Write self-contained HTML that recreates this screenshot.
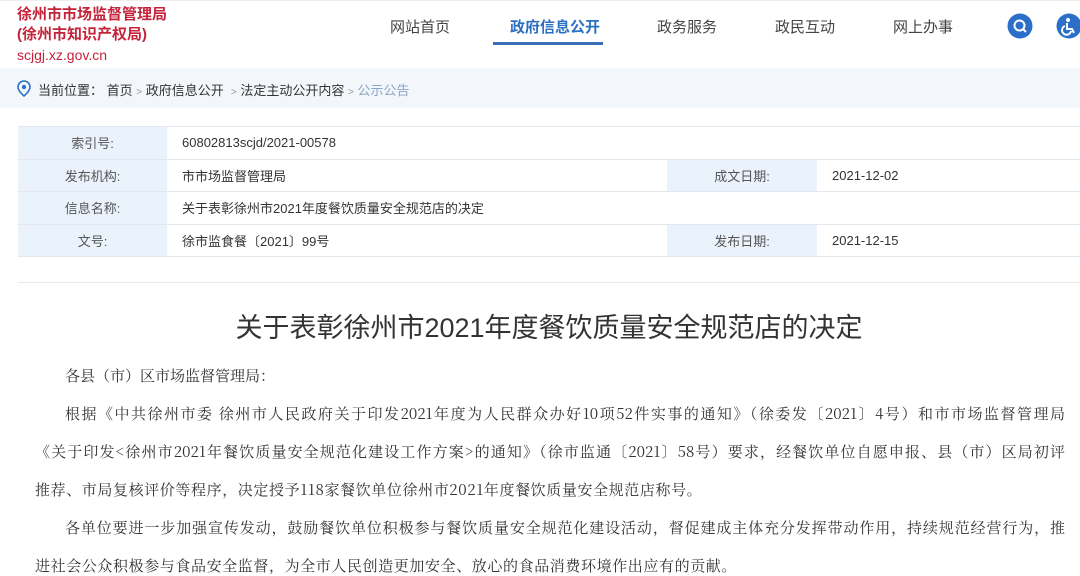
<!DOCTYPE html>
<html><head><meta charset="utf-8">
<style>
*{margin:0;padding:0;box-sizing:border-box}
body{width:1080px;height:572px;overflow:hidden;background:#fff;font-family:"Liberation Sans","Noto Sans CJK SC",sans-serif;color:#333;position:relative}
.a{position:absolute;white-space:nowrap}
.logo{color:#c5233a;font-weight:bold;font-size:15px;line-height:20px}
.nav{font-size:15px;color:#444;top:16px}
.crumb{position:absolute;left:0;top:68px;width:1080px;height:40px;background:#f3f7fb}
table{position:absolute;left:18px;top:126px;width:1062px;border-collapse:collapse;font-size:13px;color:#333}
td{height:32.5px;border-top:1px solid #e4e8ee;border-bottom:1px solid #e4e8ee;padding:0}
td.l{background:#eaf2fb;text-align:center;color:#555;width:149px}
td.v{padding-left:15px}
.p{position:absolute;left:35px;width:1030px;font-size:15px;color:#333;text-align:justify;text-align-last:justify;white-space:nowrap;font-family:"Noto Serif CJK SC","Noto Sans CJK SC",serif}
.p.i{left:65px;width:1000px}
.p.s{text-align-last:left}
</style></head><body>
<div style="position:absolute;left:0;top:0;width:1080px;height:1px;background:#eee"></div>
<div class="a logo" style="left:17px;top:5px">徐州市市场监督管理局</div>
<div class="a logo" style="left:17px;top:25px">(徐州市知识产权局)</div>
<div class="a" style="left:17px;top:47px;font-size:14px;color:#c5233a">scjgj.xz.gov.cn</div>
<div class="a nav" style="left:390px">网站首页</div>
<div class="a nav" style="left:510px;color:#2b6fc2;font-weight:bold">政府信息公开</div>
<div style="position:absolute;left:493px;top:42px;width:110px;height:3px;background:#3a6fb8"></div>
<div class="a nav" style="left:657px">政务服务</div>
<div class="a nav" style="left:775px">政民互动</div>
<div class="a nav" style="left:893px">网上办事</div>
<svg class="a" style="left:1007px;top:13px" width="26" height="26"><circle cx="13" cy="13" r="12.5" fill="#2b6fc8"/><circle cx="12.5" cy="12.5" r="5" fill="none" stroke="#fff" stroke-width="2"/><path d="M16 16l3 3" stroke="#fff" stroke-width="2"/></svg>
<svg class="a" style="left:1056px;top:13px" width="26" height="26"><circle cx="13" cy="13" r="12.5" fill="#2b6fc8"/><circle cx="12" cy="7" r="2" fill="#fff"/><path d="M11 10v6h5l2 4M9 13a4.5 4.5 0 1 0 6 5" fill="none" stroke="#fff" stroke-width="2"/></svg>
<div class="crumb"></div>
<svg class="a" style="left:17px;top:80px" width="14" height="17"><path d="M7 1a6 6 0 0 0-6 6c0 4 6 9 6 9s6-5 6-9a6 6 0 0 0-6-6z" fill="none" stroke="#2b6fc8" stroke-width="1.6"/><circle cx="7" cy="7" r="2.2" fill="#2b6fc8"/></svg>
<div class="a" style="left:38px;top:80px;font-size:13px;color:#333">当前位置： 首页 <span style="color:#999;font-size:10px">&gt;</span> 政府信息公开 &nbsp;<span style="color:#999;font-size:10px">&gt;</span> 法定主动公开内容 <span style="color:#999;font-size:10px">&gt;</span> <span style="color:#8aa4c4">公示公告</span></div>
<table>
<tr><td class="l">索引号:</td><td class="v" colspan="3">60802813scjd/2021-00578</td></tr>
<tr><td class="l">发布机构:</td><td class="v" style="width:500px">市市场监督管理局</td><td class="l" style="width:150px">成文日期:</td><td class="v">2021-12-02</td></tr>
<tr><td class="l">信息名称:</td><td class="v" colspan="3">关于表彰徐州市2021年度餐饮质量安全规范店的决定</td></tr>
<tr><td class="l">文号:</td><td class="v">徐市监食餐〔2021〕99号</td><td class="l">发布日期:</td><td class="v">2021-12-15</td></tr>
</table>
<div style="position:absolute;left:18px;top:282px;width:1062px;height:1px;background:#e8e8e8"></div>
<div class="a" style="left:0;width:1098px;text-align:center;top:306px;font-size:27px;color:#333">关于表彰徐州市2021年度餐饮质量安全规范店的决定</div>
<div class="p i s" style="top:365px">各县（市）区市场监督管理局：</div>
<div class="p i" style="top:403px">根据《中共徐州市委 徐州市人民政府关于印发2021年度为人民群众办好10项52件实事的通知》（徐委发〔2021〕4号）和市市场监督管理局</div>
<div class="p" style="top:441px">《关于印发&lt;徐州市2021年餐饮质量安全规范化建设工作方案&gt;的通知》（徐市监通〔2021〕58号）要求，经餐饮单位自愿申报、县（市）区局初评</div>
<div class="p s" style="top:479px;letter-spacing:0.6px">推荐、市局复核评价等程序，决定授予118家餐饮单位徐州市2021年度餐饮质量安全规范店称号。</div>
<div class="p i" style="top:517px">各单位要进一步加强宣传发动，鼓励餐饮单位积极参与餐饮质量安全规范化建设活动，督促建成主体充分发挥带动作用，持续规范经营行为，推</div>
<div class="p s" style="top:555px;letter-spacing:0.6px">进社会公众积极参与食品安全监督，为全市人民创造更加安全、放心的食品消费环境作出应有的贡献。</div>
</body></html>
